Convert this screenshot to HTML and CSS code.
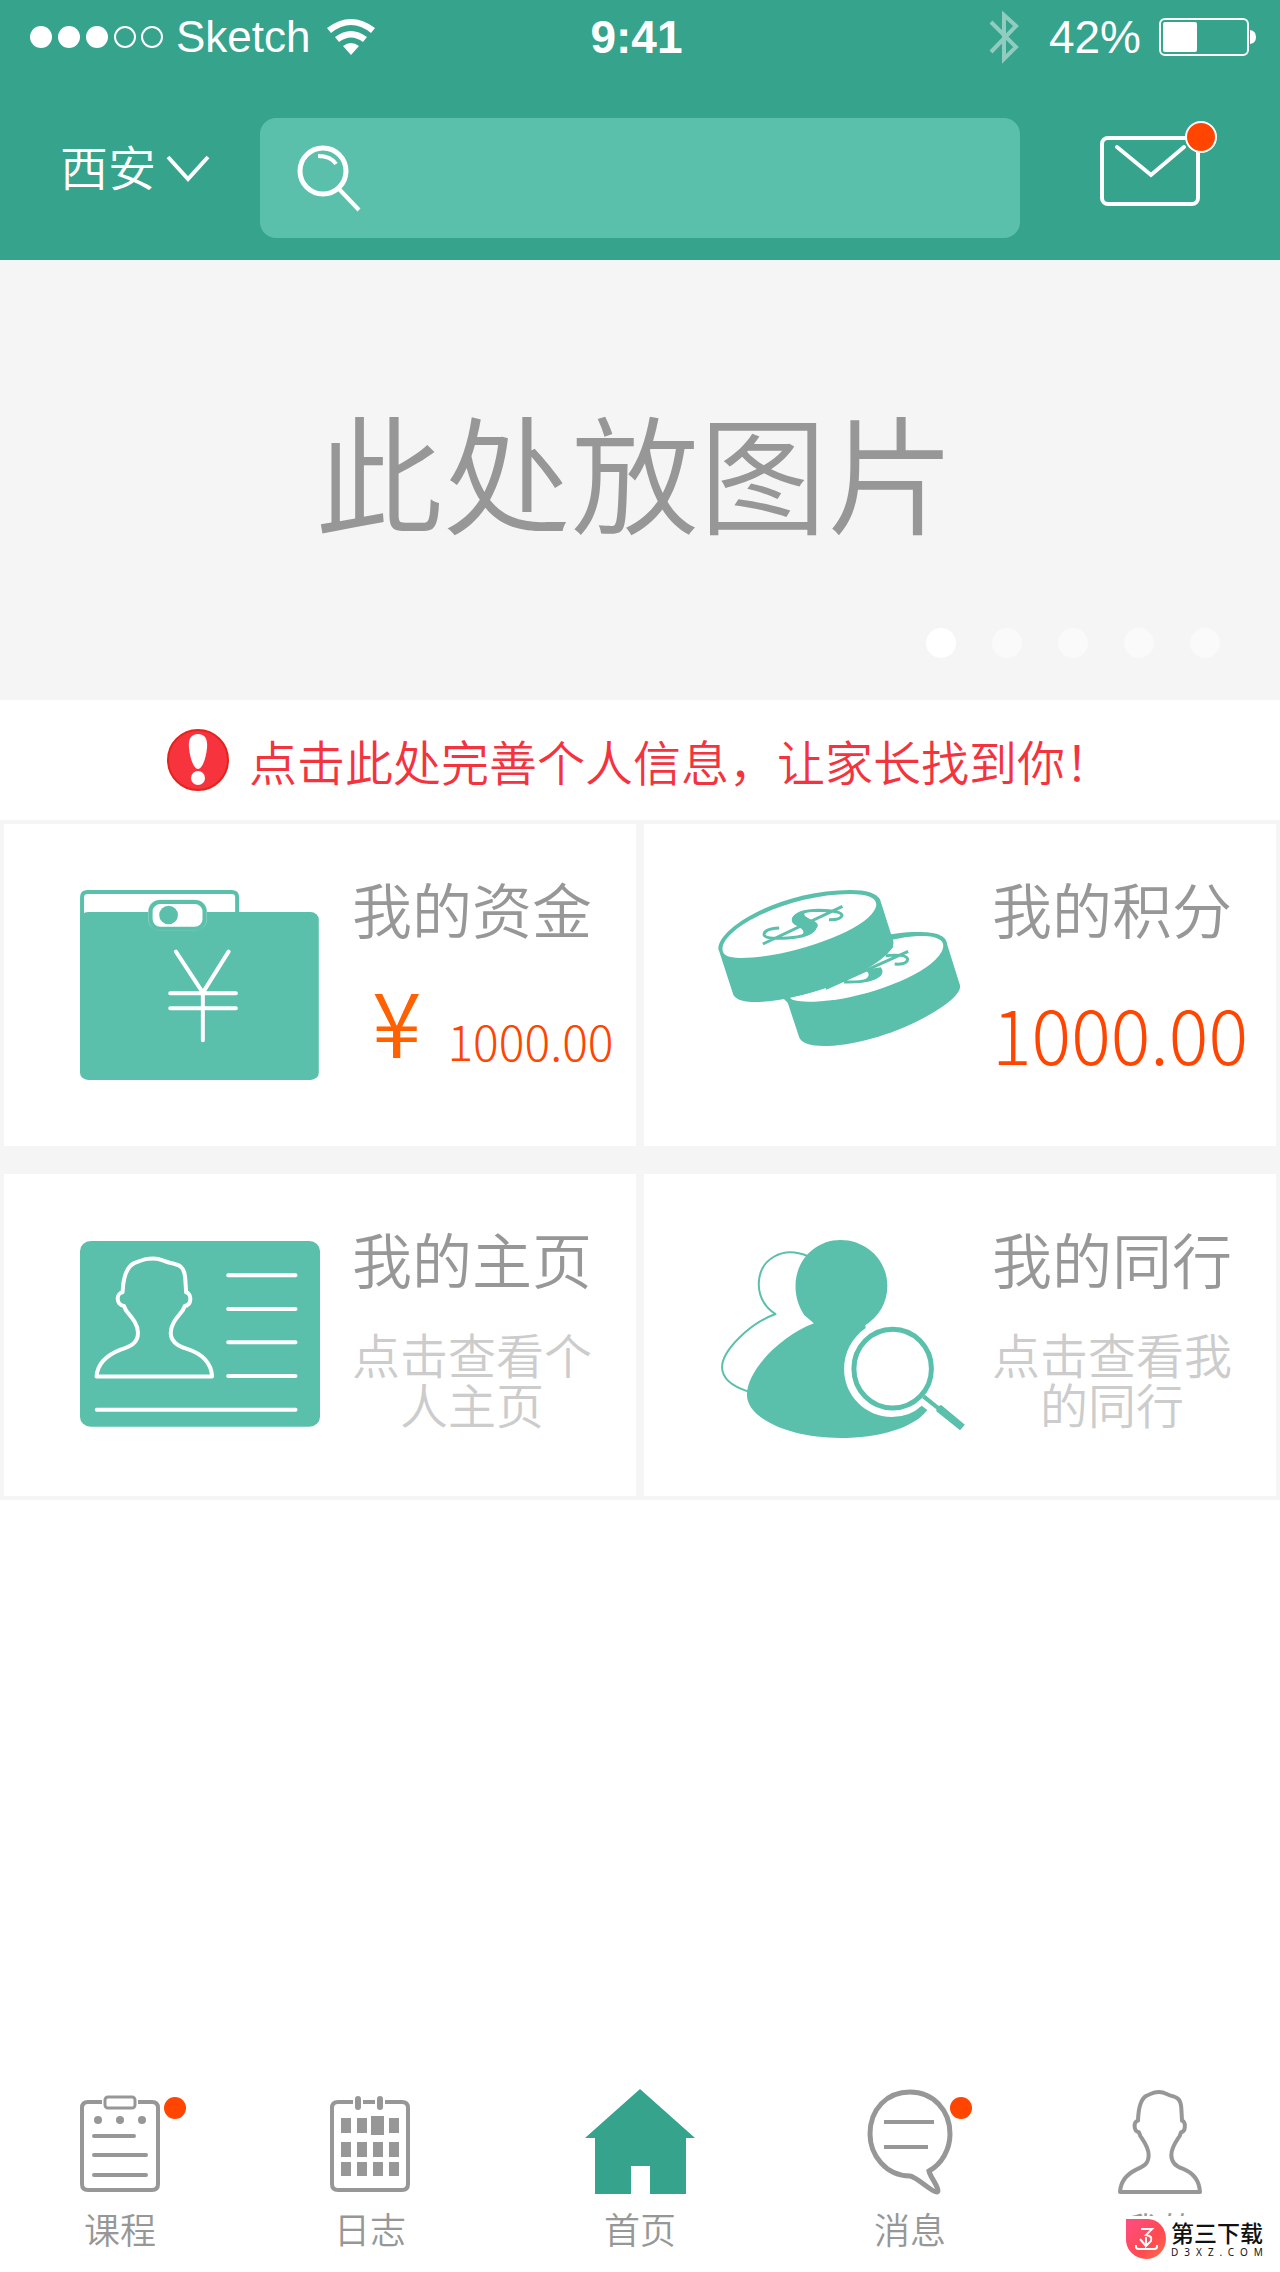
FILE: index.html
```html
<!DOCTYPE html>
<html lang="zh-CN">
<head>
<meta charset="utf-8">
<meta name="viewport" content="width=device-width, initial-scale=1">
<title>首页</title>
<link rel="stylesheet" href="styles.css">
</head>
<body>
<div class="page">
  <header class="header">
    <div class="status">
      <div class="status-left">
        <svg class="signal" viewBox="0 0 134 22" aria-hidden="true">
          <g fill="#fff"><circle cx="11" cy="11" r="11"/><circle cx="39" cy="11" r="11"/><circle cx="67" cy="11" r="11"/></g>
          <g fill="none" stroke="#fff" stroke-width="2"><circle cx="95" cy="11" r="10"/><circle cx="122" cy="11" r="10"/></g>
        </svg>
        <span>Sketch</span>
        <svg class="wifi" viewBox="0 0 48 36" aria-hidden="true">
          <path d="M0 9Q24-9 48 9L44 14Q24-2 4 14Z" fill="#fff"/>
          <path d="M8 18Q24 6 40 18L36 23Q24 14 12 23Z" fill="#fff"/>
          <path d="M16 27Q24 21 32 27L24 36Z" fill="#fff"/>
        </svg>
      </div>
      <time class="clock">9:41</time>
      <div class="status-right">
        <svg class="bluetooth" viewBox="0 0 30 52" fill="none" stroke="#fff" stroke-opacity=".45" stroke-width="4" aria-hidden="true"><path d="M2 11L27 36 15 48V4L27 15 2 41"/></svg>
        <span>42%</span>
        <svg class="battery" viewBox="0 0 98 38" aria-hidden="true">
          <rect x="1" y="1" width="88" height="36" rx="5" fill="none" stroke="#fff" stroke-width="2"/>
          <rect x="4" y="4" width="34" height="30" rx="2" fill="#fff"/>
          <path d="M91 12Q97 13 97 19T91 26Z" fill="#fff"/>
        </svg>
      </div>
    </div>
    <div class="toolbar">
      <div class="city">
        <select class="city-select" aria-label="城市"><option>西安</option></select>
        <svg class="chevron" viewBox="0 0 44 26" fill="none" stroke="#fff" stroke-width="4" aria-hidden="true"><path d="M2 2L22 24 42 2"/></svg>
      </div>
      <label class="search">
        <svg class="search-icon" viewBox="0 0 66 68" fill="none" stroke="#fff" aria-hidden="true">
          <circle cx="27" cy="27" r="23" stroke-width="5"/><path d="M22 12Q35 12 40 20" stroke-width="4"/><path d="M43 45L63 66" stroke-width="4"/>
        </svg>
        <input class="search-input" type="search" aria-label="搜索">
      </label>
      <button class="mail" type="button" aria-label="邮件">
        <svg viewBox="0 0 118 100" aria-hidden="true">
          <rect x="2" y="20" width="96" height="66" rx="6" fill="none" stroke="#fff" stroke-width="4"/>
          <path d="M17 29L51 57 84 29" fill="none" stroke="#fff" stroke-width="4" stroke-linecap="round"/>
          <circle cx="101" cy="19" r="15" fill="#ff4500" stroke="#fff" stroke-width="2"/>
        </svg>
      </button>
    </div>
  </header>

  <main>
    <section class="banner">
      <p class="banner-text">此处放图片</p>
      <div class="pager" aria-hidden="true"><i class="dot dot-on"></i><i class="dot"></i><i class="dot"></i><i class="dot"></i><i class="dot"></i></div>
    </section>

    <a class="notice" href="#profile">
      <svg class="alert" viewBox="0 0 62 62" aria-hidden="true">
        <circle cx="31" cy="31" r="30" fill="#f7333e" stroke="#e3241c" stroke-width="2"/>
        <path d="M31 5C37 5 41 9 40 19C39 30 35 40 31 40S23 30 22 19C21 9 25 5 31 5Z" fill="#fff"/>
        <circle cx="31" cy="49" r="7" fill="#fff"/>
      </svg>
      <span>点击此处完善个人信息，让家长找到你！</span>
    </a>

    <section class="cards">
      <a class="card" href="#funds">
        <svg class="card-icon" viewBox="196 234 588 600" preserveAspectRatio="none" aria-hidden="true">
          <path class="line" d="M201 330V262Q201 246 215 246H567Q581 246 581 262V330"/>
          <rect class="fill" x="196" y="306" width="585" height="504" rx="20" ry="22"/>
          <rect x="363" y="269" width="144" height="93" rx="30" ry="34" fill="#a5dbcf"/>
          <rect x="369" y="276" width="132" height="80" rx="24" ry="28" fill="#fff" class="line"/>
          <ellipse class="fill" cx="413" cy="315" rx="23" ry="28"/>
          <path class="line line-white" d="M431 425L497 548 560 425M497 548V691M417 550H578M417 595H578"/>
        </svg>
        <div class="card-body">
          <h2 class="card-title">我的资金</h2>
          <p class="money"><span class="yen">¥</span><span class="amount-small">1000.00</span></p>
        </div>
      </a>
      <a class="card" href="#points">
        <svg class="card-icon" viewBox="196 234 588 600" preserveAspectRatio="none" aria-hidden="true">
          <path class="fill" d="M352 566L362 578 390 682Q398 710 460 708C550 704 660 655 735 595Q792 548 783 522L753 405C752 372 718 364 670 366Q640 367 600 376L480 470Z"/>
          <path d="M367 562C450 545 560 490 620 412L618 389Q650 380 680 378C735 376 752 394 739 425C710 490 580 550 480 569C420 578 372 578 367 562Z" fill="#fff"/>
          <path class="coin-mark" d="M602 437Q654 431 656 448Q654 465 624 462M500 516Q570 518 586 494M455 535L657 424"/>
          <path class="fill" d="M555 484Q562 475 590 472Q598 486 590 497Q575 514 535 518Q572 500 555 484Z"/>
          <path class="fill" d="M192 418C190 350 350 240 515 240Q575 240 588 268L621 395C625 435 540 495 460 532Q350 578 274 576Q235 574 228 552L194 424Z"/>
          <path d="M202 416C205 350 370 252 515 252C570 252 590 272 573 303C545 365 360 445 245 444Q201 444 202 416Z" fill="#fff"/>
          <path class="coin-mark" d="M341 354Q303 357 304 374Q306 388 362 384Q415 380 428 356M377 327Q383 302 438 301Q492 302 495 316Q492 330 463 329M301 402L496 289"/>
          <path class="fill" d="M372 330Q370 312 405 305C392 325 435 327 436 346Q430 374 392 382C420 352 370 352 372 330Z"/>
        </svg>
        <div class="card-body">
          <h2 class="card-title">我的积分</h2>
          <p class="amount-large">1000.00</p>
        </div>
      </a>
      <a class="card" href="#home">
        <svg class="card-icon" viewBox="196 204 588 600" preserveAspectRatio="none" aria-hidden="true">
          <rect class="fill" x="196" y="213" width="588" height="557" rx="26" ry="30"/>
          <path class="line line-white" transform="translate(95 152) scale(1.18)" d="M120 396C122 360 145 340 170 328C190 320 206 312 206 285C206 262 192 245 181 228L177 217C160 214 160 185 174 182C175 150 182 118 198 108C222 97 225 96 238 96C252 96 258 102 272 107C292 112 302 116 304 145L306 182C318 186 318 214 303 217L299 228C288 245 274 262 274 285C274 310 290 320 308 326C338 338 358 362 360 396Z"/>
          <path class="line line-white" d="M559 316H724M559 417H724M559 517H724M559 618H724M237 719H724"/>
        </svg>
        <div class="card-body">
          <h2 class="card-title">我的主页</h2>
          <p class="card-note">点击查看个人主页</p>
        </div>
      </a>
      <a class="card" href="#peers">
        <svg class="card-icon" viewBox="196 204 588 600" preserveAspectRatio="none" aria-hidden="true">
          <path class="line line-thin" d="M410 258C350 228 291 265 291 345Q292 400 332 432C270 460 201 540 201 592Q202 640 264 664"/>
          <path class="fill" d="M491 210C555 210 606 270 606 348C606 398 585 440 552 466L553 474C518 505 500 548 500 598C500 676 552 741 617 741Q662 740 690 707L704 720C670 775 585 804 491 804C365 804 262 745 262 674C262 600 345 498 426 460L402 435C390 410 381 385 381 348C381 270 430 210 491 210Z"/>
          <ellipse class="line line-lens" cx="619" cy="596" rx="95" ry="118"/>
          <path class="fill" d="M691 684L698 674 732 708 738 705 796 764 784 781 726 724V718Z"/>
        </svg>
        <div class="card-body">
          <h2 class="card-title">我的同行</h2>
          <p class="card-note">点击查看我的同行</p>
        </div>
      </a>
    </section>
  </main>

  <nav class="tabs">
    <a class="tab" href="#course">
      <svg class="tab-icon" viewBox="0 0 80 106" fill="none" stroke="#979797" stroke-width="4" stroke-linecap="round" aria-hidden="true">
        <path d="M22 13H8Q2 13 2 19V95Q2 101 8 101H72Q78 101 78 95V19Q78 13 72 13H58" stroke-linecap="butt"/>
        <rect x="25" y="8" width="30" height="11" rx="3" stroke-width="3"/>
        <path d="M14 47H54M14 66H66M14 86H66"/>
        <g fill="#979797" stroke="none"><circle cx="18" cy="31" r="4"/><circle cx="40" cy="31" r="4"/><circle cx="62" cy="31" r="4"/></g>
      </svg>
      <span>课程</span>
      <i class="badge"></i>
    </a>
    <a class="tab" href="#log">
      <svg class="tab-icon" viewBox="0 0 80 106" aria-hidden="true">
        <path d="M23 13H8Q2 13 2 19V95Q2 101 8 101H72Q78 101 78 95V19Q78 13 72 13H55M33 13H45" fill="none" stroke="#979797" stroke-width="4"/>
        <path d="M28 10v8M50 10v8" fill="none" stroke="#979797" stroke-width="6" stroke-linecap="round"/>
        <path d="M11 29h10v15h-10zM27 29h10v15h-10zM41 27h13v19h-13zM59 29h10v15h-10zM11 53h10v15h-10zM27 53h10v15h-10zM43 53h10v15h-10zM59 53h10v15h-10zM11 73h10v14h-10zM27 73h10v14h-10zM43 73h10v14h-10zM59 73h10v14h-10z" fill="#979797"/>
      </svg>
      <span>日志</span>
    </a>
    <a class="tab tab-home" href="#index" aria-current="page">
      <svg class="tab-icon" viewBox="0 0 110 106" aria-hidden="true"><path d="M55 0L110 49H101V105H65V77H46V105H10V49H0Z" fill="#36a38c"/></svg>
      <span>首页</span>
    </a>
    <a class="tab" href="#messages">
      <svg class="tab-icon" viewBox="0 0 80 106" fill="none" stroke="#979797" stroke-width="5" aria-hidden="true">
        <path d="M40 87C16 87 0 66 0 45C0 20 17 3 40 3C63 3 80 21 80 45C80 60 72 75 59 82C60 88 71 101 67 103C63 104 47 88 40 87Z"/>
        <path d="M14 33H64M14 58H58" stroke-width="4"/>
      </svg>
      <span>消息</span>
      <i class="badge badge-near"></i>
    </a>
    <a class="tab" href="#me">
      <svg class="tab-icon" viewBox="120 87 240 318" fill="none" stroke="#979797" stroke-width="12" stroke-linejoin="round" aria-hidden="true">
        <path d="M120 396C122 360 145 340 170 328C190 320 206 312 206 285C206 262 192 245 181 228L177 217C160 214 160 185 174 182C175 150 182 118 198 108C222 97 225 96 238 96C252 96 258 102 272 107C292 112 302 116 304 145L306 182C318 186 318 214 303 217L299 228C288 245 274 262 274 285C274 310 290 320 308 326C338 338 358 362 360 396Z"/>
      </svg>
      <span>我的</span>
    </a>
  </nav>

  <aside class="watermark">
    <svg class="watermark-logo" viewBox="0 0 40 40" aria-hidden="true">
      <defs><linearGradient id="wm" x1="0" y1="0" x2="1" y2="1"><stop offset="0" stop-color="#ff4d84"/><stop offset=".6" stop-color="#ff4a50"/><stop offset="1" stop-color="#ff704f"/></linearGradient></defs>
      <path d="M0 0H22A18 20 0 0 1 40 20A20 20 0 0 1 20 40A20 20 0 0 1 0 22Z" fill="url(#wm)"/>
      <path d="M15 10H26L20 16Q27 17 25 22L20 27V18M14 20L20 27M10 26V28Q10 30 13 30H28Q31 30 31 28V26" fill="none" stroke="#fff" stroke-width="2"/>
    </svg>
    <div class="watermark-text"><strong>第三下载</strong><small>D3XZ.COM</small></div>
  </aside>
</div>
</body>
</html>
```
FILE: styles.css
```css
* { box-sizing: border-box; }

body {
  margin: 0;
  background: #fff;
  color: #979797;
  font-family: "Noto Sans CJK SC", sans-serif;
  font-weight: 350;
}

h2, p { margin: 0; font-weight: 350; }
a { color: inherit; text-decoration: none; }
svg { display: block; flex: none; overflow: visible; }

.page {
  position: relative;
  display: flex;
  flex-direction: column;
  min-height: 100vh;
}

/* Header */
.header { background: #36a38c; color: #fff; }

.status {
  display: grid;
  grid-template-columns: 1fr auto 1fr;
  align-items: center;
  height: 74px;
  padding: 0 23px 0 16px;
  font: 400 46px/52px "Liberation Sans", Arial, sans-serif;
}
.status-left, .status-right { display: flex; align-items: center; }
.status-left { gap: 16px; padding-left: 14px; font-size: 44px; }
.status-right { justify-content: flex-end; gap: 18px; }
.clock { font-weight: 700; }
.signal { width: 134px; height: 22px; margin-right: -4px; }
.wifi { width: 48px; height: 36px; }
.bluetooth { width: 30px; height: 52px; margin-right: 12px; }
.battery { width: 98px; height: 38px; }

.toolbar {
  display: flex;
  align-items: flex-start;
  padding: 44px 62px 22px 60px;
}
.city { display: flex; align-items: center; gap: 10px; height: 100px; }
.city-select {
  width: 96px;
  height: 60px;
  margin-bottom: 6px;
  padding: 0;
  border: 0;
  appearance: none;
  background: transparent;
  color: #fff;
  font: inherit;
  font-size: 48px;
  line-height: 60px;
}
.chevron { width: 44px; height: 26px; pointer-events: none; }
.search {
  flex: 1;
  display: flex;
  align-items: center;
  min-width: 0;
  height: 120px;
  margin: 0 80px 0 50px;
  padding: 0 36px;
  border-radius: 16px;
  background: #5bc0ab;
}
.search-icon { width: 66px; height: 68px; }
.search-input {
  flex: 1;
  min-width: 0;
  height: 80px;
  margin-left: 16px;
  border: 0;
  outline: 0;
  appearance: none;
  background: transparent;
  color: #fff;
  font: inherit;
  font-size: 48px;
}
.mail { width: 118px; height: 100px; padding: 0; border: 0; background: none; }
.mail svg { width: 118px; height: 100px; }

/* Banner */
.banner {
  display: flex;
  flex-direction: column;
  justify-content: space-between;
  height: 440px;
  padding: 130px 60px 42px 50px;
  background: #f5f5f5;
}
.banner-text { font-size: 128px; line-height: 160px; text-align: center; }
.pager { display: flex; justify-content: flex-end; gap: 36px; }
.dot { width: 30px; height: 30px; border-radius: 50%; background: #fafafa; }
.dot-on { background: #fff; }

.notice {
  display: flex;
  align-items: center;
  justify-content: center;
  gap: 20px;
  height: 120px;
  color: #f5333f;
  font-size: 48px;
  line-height: 60px;
}
.alert { width: 62px; height: 62px; }

/* Cards */
.cards {
  display: grid;
  grid-template-columns: 1fr 1fr;
  gap: 28px 8px;
  padding: 4px;
  background: #f5f5f5;
}
.card {
  display: flex;
  gap: 32px;
  min-height: 322px;
  padding: 54px 0 0 76px;
  background: #fff;
}
.card-icon { width: 240px; height: 200px; margin-top: 10px; }
.card-body { width: 240px; }
.card-title { font-size: 60px; line-height: 60px; }
.card-note {
  margin-top: 40px;
  color: #ccc;
  font-size: 48px;
  line-height: 50px;
  text-align: center;
}
.money {
  display: flex;
  align-items: flex-end;
  gap: 26px;
  margin-top: 36px;
  padding-left: 20px;
  line-height: 90px;
  white-space: nowrap;
}
.yen { color: #ff6000; font-size: 90px; }
.amount-small { color: #ff4500; font-size: 48px; font-weight: 300; line-height: 48px; }
.amount-large {
  margin-top: 50px;
  color: #ff4500;
  font-size: 74px;
  font-weight: 300;
  line-height: 90px;
  white-space: nowrap;
}

.fill { fill: #5bc0ab; }
.line {
  fill: none;
  stroke: #5bc0ab;
  stroke-width: 4px;
  stroke-linecap: round;
  stroke-linejoin: round;
  vector-effect: non-scaling-stroke;
}
rect.line { fill: #fff; }
.line-white { stroke: #fff; }
.line-thin { stroke-width: 2px; }
.line-lens { stroke-width: 5px; fill: #fff; }
.coin-mark {
  fill: none;
  stroke: #5bc0ab;
  stroke-width: 3px;
  vector-effect: non-scaling-stroke;
}

/* Tab bar */
.tabs {
  display: flex;
  justify-content: space-between;
  margin-top: auto;
  padding: 0 80px 24px;
}
.tab {
  position: relative;
  display: flex;
  flex-direction: column;
  align-items: center;
  gap: 13px;
  width: 80px;
  font-size: 36px;
  line-height: 40px;
}
.tab-home { width: 120px; }
.tab-icon { height: 106px; }
.badge {
  position: absolute;
  top: 8px;
  left: 84px;
  width: 22px;
  height: 22px;
  border-radius: 50%;
  background: #ff4500;
}
.badge-near { left: 80px; }

/* Site watermark laid over the corner of the tab bar */
.watermark {
  position: absolute;
  right: 0;
  bottom: 0;
  display: flex;
  gap: 5px;
  width: 160px;
  height: 56px;
  padding: 3px 0 0 6px;
  background: #fff;
  color: #111;
}
.watermark-logo { width: 40px; height: 40px; }
.watermark-text { display: flex; flex-direction: column; }
.watermark-text strong { font-size: 23px; font-weight: 500; line-height: 26px; }
.watermark-text small { font: 400 10px/14px "Noto Sans", sans-serif; letter-spacing: 6px; }
```
